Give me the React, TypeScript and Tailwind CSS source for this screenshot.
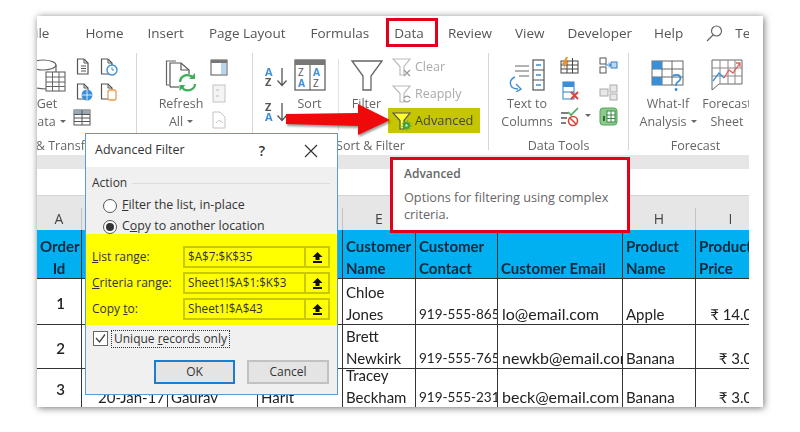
import { ReactNode } from "react"

const rows = [
  { id: "1", b: "", c: "", d: "", name: ["Chloe", "Jones"], phone: "919-555-8654", email: "lo@email.com", product: "Apple", price: "₹ 14.00" },
  { id: "2", b: "", c: "", d: "", name: ["Brett", "Newkirk"], phone: "919-555-7654", email: "newkb@email.com", product: "Banana", price: "₹ 3.00" },
  { id: "3", b: "20-Jan-17", c: "Gaurav", d: "Harit", name: ["Tracey", "Beckham"], phone: "919-555-2314", email: "beck@email.com", product: "Banana", price: "₹ 3.00" },
]

const cols = "grid grid-cols-[45px_86px_90px_85px_73px_82px_125px_73px_70px] w-[729px]"
const cell = "flex flex-col justify-end overflow-hidden whitespace-nowrap border-r border-b border-[#333] pl-[3px] [&>span]:relative [&>span]:top-[1px]"

function Ico({ w, h, children }: { w: number; h: number; children: ReactNode }) {
  return (
    <svg width={w} height={h} viewBox={`0 0 ${w} ${h}`} fill="none" className="shrink-0 block">
      {children}
    </svg>
  )
}

function Funnel({ fill = "none", stroke = "#666" }: { fill?: string; stroke?: string }) {
  return <path d="M1 2H18L12 9.5V18H8V9.5Z" fill={fill} stroke={stroke} strokeWidth="1.2" />
}

function Doc({ children }: { children?: ReactNode }) {
  return (
    <Ico w={18} h={18}>
      <path d="M1.5 1H8L12 5V16H1.5Z" stroke="#555" strokeWidth="1.2" fill="#fff" />
      <path d="M8 1V5H12" stroke="#555" strokeWidth="1" />
      {children}
    </Ico>
  )
}

function SmallTable() {
  return (
    <Ico w={18} h={17}>
      <rect x="1" y="1" width="16" height="15" stroke="#555" fill="#fff" />
      <rect x="1" y="1" width="16" height="4" fill="#9aa6b2" />
      <path d="M1 5.5H17M1 9H17M1 12.500H17M9 1V16" stroke="#555" />
    </Ico>
  )
}

function GetDataIcon() {
  return (
    <Ico w={37} h={33}>
      <ellipse cx="14" cy="6" rx="13" ry="5" stroke="#666" strokeWidth="1.2" />
      <path d="M1 6V25C1 28 8 30 17 30M27 6V13" stroke="#666" strokeWidth="1.2" />
      <rect x="17" y="13" width="19" height="19" fill="#fff" stroke="#555" />
      <path d="M17 18H36M17 23H36M17 27.500H36M23.500 13V32M30 13V32" stroke="#666" />
    </Ico>
  )
}

function RefreshIcon() {
  return (
    <Ico w={32} h={33}>
      <path d="M4 26H1.500V2H11" stroke="#666" strokeWidth="1.2" />
      <path d="M5 28V4H16L24 11V15" stroke="#555" strokeWidth="1.2" />
      <path d="M16 4V11H24" stroke="#555" strokeWidth="1.2" />
      <path d="M5 28H14" stroke="#555" strokeWidth="1.2" />
      <path d="M15 23C15 18 20 14.500 26 17L28 19" stroke="#3fae5b" strokeWidth="2.200" />
      <path d="M30 14V20H24Z" fill="#3fae5b" />
      <path d="M30 25C30 30 24 33 19 30.500L17 28" stroke="#3fae5b" strokeWidth="2.200" />
      <path d="M14.500 32V26H20.500Z" fill="#3fae5b" />
    </Ico>
  )
}

function SortLetters({ top, bottom, topBlue }: { top: string; bottom: string; topBlue: boolean }) {
  return (
    <Ico w={26} h={21}>
      <text x="0" y="10" fontSize="11" fontWeight="700" fontFamily="Open Sans" fill={topBlue ? "#3b8fd6" : "#555"}>{top}</text>
      <text x="0" y="20" fontSize="11" fontWeight="700" fontFamily="Open Sans" fill={topBlue ? "#555" : "#3b8fd6"}>{bottom}</text>
      <path d="M17 2V19M12.500 14.500L17 19.500L21.500 14.500" stroke="#555" strokeWidth="1.300" />
    </Ico>
  )
}

function BigSortIcon() {
  return (
    <Ico w={32} h={32}>
      <rect x="1" y="1" width="30" height="30" stroke="#555" strokeWidth="1.200" fill="#fff" />
      <rect x="1" y="1" width="30" height="5" fill="#777" />
      <path d="M16 6V31" stroke="#555" />
      <text x="4" y="17" fontSize="10" fontFamily="Open Sans" fill="#555">Z</text>
      <text x="4" y="28" fontSize="10" fontFamily="Open Sans" fontWeight="700" fill="#3b8fd6">A</text>
      <text x="19" y="17" fontSize="10" fontFamily="Open Sans" fontWeight="700" fill="#3b8fd6">A</text>
      <text x="19" y="28" fontSize="10" fontFamily="Open Sans" fill="#555">Z</text>
    </Ico>
  )
}

function BigFunnel() {
  return (
    <Ico w={32} h={33}>
      <path d="M1 2H31L20 17V31H12V17Z" stroke="#666" strokeWidth="1.300" />
    </Ico>
  )
}

function ClearIcon() {
  return (
    <Ico w={20} h={20}>
      <Funnel stroke="#bbb" />
      <path d="M12 13L18 19M18 13L12 19" stroke="#999" strokeWidth="1.200" />
    </Ico>
  )
}

function ReapplyIcon() {
  return (
    <Ico w={20} h={20}>
      <Funnel stroke="#bbb" />
      <path d="M12 14C13 11.500 17 11.500 18 14M18 16C17 18.500 13 18.500 12 16" stroke="#999" strokeWidth="1.100" />
    </Ico>
  )
}

function AdvancedIcon() {
  return (
    <Ico w={20} h={20}>
      <Funnel fill="#ffff30" stroke="#555" />
      <circle cx="14.500" cy="14.500" r="3.500" fill="#3da13d" />
      <circle cx="14.500" cy="14.500" r="4.500" stroke="#3da13d" strokeDasharray="1.500 1.500" />
      <circle cx="14.500" cy="14.500" r="1.200" fill="#d8f0c0" />
    </Ico>
  )
}

function TextColumnsIcon() {
  return (
    <Ico w={36} h={33}>
      <path d="M6 7H20M6 12H20M10 17H20" stroke="#666" strokeWidth="1.200" />
      <rect x="24" y="1" width="11" height="30" stroke="#555" strokeWidth="1.200" fill="#fff" />
      <path d="M24 11H35M24 21H35" stroke="#555" />
      <path d="M27 6H32M27 16H32M27 26H32" stroke="#3b8fd6" strokeWidth="1.500" />
      <path d="M6 18C-1 21 0 30 9 30M7 25L12 30L7 33" stroke="#3b8fd6" strokeWidth="1.400" />
    </Ico>
  )
}

function FlashFillIcon() {
  return (
    <Ico w={19} h={17}>
      <rect x="1" y="4" width="17" height="12" stroke="#444" />
      <path d="M1 8H18M1 12H18M7 4V16M12.500 1V16" stroke="#444" />
      <path d="M6 0L2 7H5L3 12L9 5H6L8 0Z" fill="#f0932b" />
    </Ico>
  )
}

function RemoveDupesIcon() {
  return (
    <Ico w={18} h={19}>
      <rect x="1" y="1" width="11" height="17" stroke="#2f7fc7" fill="#fff" />
      <rect x="1" y="1" width="11" height="5" fill="#3b8fd6" />
      <path d="M1 11H12" stroke="#2f7fc7" />
      <path d="M9 11L16 18M16 11L9 18" stroke="#d9453b" strokeWidth="2" />
    </Ico>
  )
}

function ValidationIcon() {
  return (
    <Ico w={20} h={20}>
      <path d="M1 6H8M1 11H7M1 16H6" stroke="#555" strokeWidth="1.300" />
      <path d="M8 5L11 8L18 1" stroke="#4aa85c" strokeWidth="1.600" />
      <circle cx="13" cy="14" r="4.500" stroke="#d9453b" strokeWidth="1.600" />
      <path d="M10 11L16 17" stroke="#d9453b" strokeWidth="1.600" />
    </Ico>
  )
}

function ConsolidateIcon() {
  return (
    <Ico w={19} h={17}>
      <rect x="1" y="1" width="6" height="6" stroke="#555" />
      <rect x="1" y="10" width="6" height="6" stroke="#555" />
      <rect x="12" y="5" width="6" height="6" fill="#bcd8f0" stroke="#2f7fc7" />
      <path d="M6 8H12M9.500 6L12 8L9.500 10" stroke="#2f7fc7" />
    </Ico>
  )
}

function RelationshipsIcon() {
  return (
    <Ico w={19} h={17}>
      <rect x="1" y="5" width="8" height="7" fill="#e8e8e8" stroke="#aaa" />
      <rect x="11" y="1" width="7" height="7" fill="#e8e8e8" stroke="#aaa" />
      <rect x="11" y="10" width="7" height="6" fill="#e8e8e8" stroke="#aaa" />
    </Ico>
  )
}

function DataModelIcon() {
  return (
    <Ico w={19} h={19}>
      <rect x="1" y="1" width="17" height="17" rx="3" fill="#8fc98a" stroke="#4aa85c" />
      <rect x="8" y="4" width="8" height="11" fill="#fff" stroke="#3a8a46" />
      <path d="M8 8H16M8 11.500H16M12 4V15" stroke="#3a8a46" />
      <path d="M5 9V14" stroke="#2f6a38" strokeWidth="2" />
    </Ico>
  )
}

function WhatIfIcon() {
  return (
    <Ico w={34} h={34}>
      <rect x="1" y="1" width="31" height="24" stroke="#666" fill="#fff" />
      <path d="M1 9H32M1 17H32M11 1V25M21 1V25" stroke="#666" />
      <rect x="1" y="1" width="10" height="8" fill="#3b8fd6" />
      <rect x="1" y="17" width="10" height="8" fill="#3b8fd6" />
      <text x="21" y="31" fontSize="23" fontFamily="Open Sans" fill="#3b8fd6">?</text>
    </Ico>
  )
}

function ForecastIcon() {
  return (
    <Ico w={32} h={32}>
      <path d="M1 1H31V25H8L1 31Z" stroke="#666" fill="#fff" />
      <path d="M1 9H31M1 17H31M9 1V25M17 1V25M24 1V25" stroke="#888" />
      <path d="M2 22L8 14L13 19" stroke="#3b8fd6" strokeWidth="1.300" />
      <path d="M13 19L18 11L22 14L29 4M25 4H29V8" stroke="#e0605a" strokeWidth="1.300" />
    </Ico>
  )
}

function UpArrow() {
  return (
    <svg width="11" height="11" viewBox="0 0 11 11" className="block">
      <path d="M5.500 0L10.500 5H7.500V8H3.500V5H0.500Z" fill="#111" />
      <rect x="1" y="9" width="9" height="2" fill="#111" />
    </svg>
  )
}

function Divider() {
  return <div className="w-px h-[97px] mt-[6px] bg-[#d6d6d6] shrink-0" />
}

function BigLabel({ lines }: { lines: string[] }) {
  return (
    <div className="mt-[4px] flex flex-col items-center whitespace-nowrap leading-[18px]">
      {lines.map((l) => (
        <span key={l}>{l}</span>
      ))}
    </div>
  )
}

function Caret() {
  return <span className="inline-block ml-[4px] mb-[2px] align-middle border-x-[3px] border-t-[3px] border-x-transparent border-t-[#666]" />
}

function GroupLabel({ children }: { children: ReactNode }) {
  return <div className="h-[18px] leading-[18px] text-center whitespace-nowrap">{children}</div>
}

function Ribbon() {
  return (
    <div className="flex h-[108px] text-[12.5px] text-[#666] shrink-0">
      {/* Get & Transform */}
      <div className="w-[99px] shrink-0 flex flex-col">
        <div className="h-[93px] pt-[12px] flex">
          <div className="-ml-[10px] w-[40px] shrink-0 flex flex-col items-center">
            <div className="h-[33px] -mb-[1px]"><GetDataIcon /></div>
            <div className="mt-[4px] flex flex-col items-center whitespace-nowrap leading-[18px]">
              <span>Get</span>
              <span>Data<Caret /></span>
            </div>
          </div>
          <div className="ml-[9px] flex flex-col -mt-[1px]">
            <div className="flex gap-[6px] h-[25px]">
              <Doc><path d="M5 8H10M5 10.500H10M5 13H10" stroke="#555" /></Doc>
              <Doc><circle cx="12" cy="12" r="5" fill="#fff" stroke="#3b8fd6" strokeWidth="1.400" /><path d="M12 9.500V12H14" stroke="#3b8fd6" /></Doc>
            </div>
            <div className="flex gap-[6px] h-[26px]">
              <Doc><circle cx="11" cy="12" r="5.500" fill="#3b8fd6" /><path d="M5.500 12H16.500M11 6.500V17.500" stroke="#fff" strokeWidth="0.800" /></Doc>
              <Doc><rect x="8" y="7" width="8" height="10" rx="2" fill="#fff" stroke="#f09a4a" strokeWidth="1.300" /></Doc>
            </div>
            <div className="-ml-[3px]"><SmallTable /></div>
          </div>
        </div>
        <div className="-ml-[25px]"><GroupLabel>Get &amp; Transform Data</GroupLabel></div>
      </div>
      <Divider />

      {/* Queries */}
      <div className="w-[115px] shrink-0 h-[93px] pt-[12px] flex">
        <div className="ml-[19px] w-[50px] flex flex-col items-center">
          <div className="h-[32px] overflow-visible"><RefreshIcon /></div>
          <BigLabel lines={["Refresh"]} />
          <span className="leading-[18px]">All<Caret /></span>
        </div>
        <div className="ml-[4px] flex flex-col gap-[8px]">
          <Ico w={18} h={17}>
            <rect x="1" y="1" width="16" height="15" stroke="#555" fill="#fff" />
            <rect x="1" y="1" width="16" height="3" fill="#777" />
            <rect x="11" y="4" width="5" height="11" fill="#b9d4ee" />
          </Ico>
          <Ico w={18} h={19}>
            <rect x="3" y="1" width="12" height="17" stroke="#c4c4c4" fill="#f4f4f4" />
            <path d="M6 6H9M6 12H9" stroke="#bbb" />
          </Ico>
          <Ico w={18} h={18}>
            <path d="M3 1H10L15 6V17H3Z" stroke="#c4c4c4" />
            <path d="M6 12C8 9 11 9 13 12" stroke="#bbb" />
          </Ico>
        </div>
      </div>
      <Divider />

      {/* Sort & Filter */}
      <div className="w-[235px] shrink-0 flex flex-col">
        <div className="h-[93px] pt-[12px] flex">
          <div className="ml-[12px] w-[26px] mt-[7px] flex flex-col gap-[14px]">
            <SortLetters top="A" bottom="Z" topBlue />
            <SortLetters top="Z" bottom="A" topBlue={false} />
          </div>
          <div className="w-[37px] flex flex-col items-center">
            <BigSortIcon />
            <BigLabel lines={["Sort"]} />
          </div>
          <div className="ml-[10px] w-px h-[72px] bg-[#e2e2e2]" />
          <div className="ml-[6px] w-[43px] flex flex-col items-center">
            <BigFunnel />
            <div className="-mt-[1px]"><BigLabel lines={["Filter"]} /></div>
          </div>
          <div className="-mt-[5px] flex flex-col w-[92px]">
            <div className="h-[26px] flex items-center gap-[3px] pl-[4px] text-[#aaa]"><ClearIcon />Clear</div>
            <div className="h-[28px] flex items-center gap-[3px] pl-[4px] text-[#aaa]"><ReapplyIcon />Reapply</div>
            <div className="h-[25px] flex items-center gap-[3px] pl-[4px] bg-[#c6c600] text-[#444] text-[12.8px]"><AdvancedIcon />Advanced</div>
          </div>
        </div>
        <GroupLabel>Sort &amp; Filter</GroupLabel>
      </div>
      <Divider />

      {/* Data Tools */}
      <div className="w-[139px] shrink-0 flex flex-col">
        <div className="h-[93px] pt-[12px] flex">
          <div className="ml-[8px] w-[60px] flex flex-col items-center">
            <TextColumnsIcon />
            <div className="-mt-[1px]"><BigLabel lines={["Text to", "Columns"]} /></div>
          </div>
          <div className="ml-[3px] w-[39px] -mt-[2px] flex flex-col">
            <div className="h-[24px]"><FlashFillIcon /></div>
            <div className="h-[26px] pl-[2px]"><RemoveDupesIcon /></div>
            <div className="flex items-start">
              <ValidationIcon />
              <span className="ml-[5px] mt-[7px] border-x-[3px] border-t-[3px] border-x-transparent border-t-[#666]" />
            </div>
          </div>
          <div className="-mt-[2px] flex flex-col">
            <div className="h-[27px]"><ConsolidateIcon /></div>
            <div className="h-[23px]"><RelationshipsIcon /></div>
            <DataModelIcon />
          </div>
        </div>
        <GroupLabel>Data Tools</GroupLabel>
      </div>
      <Divider />

      {/* Forecast */}
      <div className="w-[133px] shrink-0 flex flex-col">
        <div className="h-[93px] pt-[12px] flex">
          <div className="ml-[9px] w-[60px] flex flex-col items-center">
            <div className="h-[32px] mt-[1px] -mb-[1px]"><WhatIfIcon /></div>
            <div className="flex flex-col items-center mt-[4px] whitespace-nowrap leading-[18px]">
              <span>What-If</span>
              <span>Analysis<Caret /></span>
            </div>
          </div>
          <div className="w-[58px] flex flex-col items-center">
            <ForecastIcon />
            <BigLabel lines={["Forecast", "Sheet"]} />
          </div>
        </div>
        <GroupLabel>Forecast</GroupLabel>
      </div>
    </div>
  )
}

function Sheet() {
  return (
    <div className="font-['Lato','Noto_Sans',sans-serif] text-[15px] leading-[22px] text-[#222]">
      <div className="bg-[#e6e6e6] h-[34px]">
        <div className={`${cols} h-full text-[14px] text-[#444] font-['Open_Sans',sans-serif]`}>
          {["A", "", "", "", "E", "", "", "H", "I"].map((letter, i) => (
            <div key={i} className="mt-[12px] border-r border-[#c4c4c4] text-center">{letter}</div>
          ))}
        </div>
      </div>
      <div className={`${cols} grid-rows-[49px_46px_44px_39px]`}>
        <div className={`${cell} bg-[#00b0f0] font-bold text-center pr-[3px] text-[#12293c]`}>
          <span>Order</span>
          <span>Id</span>
        </div>
        <div className={`${cell} bg-[#00b0f0]`} />
        <div className={`${cell} bg-[#00b0f0]`} />
        <div className={`${cell} bg-[#00b0f0]`} />
        {[["Customer", "Name"], ["Customer", "Contact"], ["Customer Email"], ["Product", "Name"], ["Product", "Price"]].map((h) => (
          <div key={h.join(" ")} className={`${cell} bg-[#00b0f0] font-bold text-[#12293c]`}>
            {h.map((t) => (
              <span key={t}>{t}</span>
            ))}
          </div>
        ))}
        {rows.map((r) => (
          <div key={r.id} className="contents">
            <div className={`${cell} justify-center! items-center pl-0 font-semibold`}><span>{r.id}</span></div>
            <div className={`${cell} items-end pr-[2px]`}><span>{r.b}</span></div>
            <div className={cell}><span>{r.c}</span></div>
            <div className={cell}><span>{r.d}</span></div>
            <div className={cell}>
              {r.name.map((n) => (
                <span key={n}>{n}</span>
              ))}
            </div>
            <div className={`${cell} text-[13.5px]`}><span>{r.phone}</span></div>
            <div className={`${cell} pl-[4px] text-[16px]`}><span>{r.email}</span></div>
            <div className={cell}><span>{r.product}</span></div>
            <div className={`${cell} items-end pr-[4px]`}><span>{r.price}</span></div>
          </div>
        ))}
      </div>
    </div>
  )
}

function RangeRow({ label, value }: { label: ReactNode; value: string }) {
  return (
    <div className="flex items-center h-[26px]">
      <div className="w-[97px] pl-[6px] shrink-0 whitespace-nowrap">{label}</div>
      <div className="w-[147px] h-[22px] border-2 border-[#c9c900] flex items-center">
        <span className="flex-1 pl-[3px] whitespace-nowrap overflow-hidden text-[11.7px]">{value}</span>
        <span className="w-[24px] h-full border-l-2 border-[#c9c900] flex items-center justify-center"><UpArrow /></span>
      </div>
    </div>
  )
}

function AdvancedFilterDialog() {
  return (
    <div className="absolute left-[48px] top-[117px] w-[253px] h-[262px] border border-[#5a9bd5] bg-[#f0f0f0] flex flex-col font-['Open_Sans',sans-serif] text-[12px] text-[#333]">
      <div className="h-[33px] bg-white flex items-center pl-[9px] text-[12.5px] text-[#333] shrink-0">
        <span className="flex-1">Advanced Filter</span>
        <span className="mr-[39px] text-[14px] font-semibold">?</span>
        <svg width="14" height="14" viewBox="0 0 14 14" className="mr-[19px]">
          <path d="M1 1L13 13M13 1L1 13" stroke="#333" strokeWidth="1.200" />
        </svg>
      </div>
      <div className="flex items-center mt-[7px] pl-[6px] pr-[7px] h-[18px] gap-[5px]">
        <span>Action</span>
        <span className="flex-1 h-px bg-[#dcdcdc]" />
      </div>
      <div className="flex items-center h-[21px] mt-[3px] pl-[17px] gap-[5px] text-[12.4px]">
        <span className="w-[14px] h-[14px] rounded-full border border-[#555] bg-white" />
        <span><u>F</u>ilter the list, in-place</span>
      </div>
      <div className="flex items-center h-[21px] pl-[17px] gap-[5px] text-[12.4px]">
        <span className="w-[14px] h-[14px] rounded-full border border-[#555] bg-white flex items-center justify-center">
          <span className="w-[8px] h-[8px] rounded-full bg-[#333]" />
        </span>
        <span>C<u>o</u>py to another location</span>
      </div>
      <div className="relative -mt-[3px] h-[91px] bg-[#ffff00] pt-[10px] text-[#333]">
        <RangeRow label={<><u>L</u>ist range:</>} value="$A$7:$K$35" />
        <RangeRow label={<><u>C</u>riteria range:</>} value="Sheet1!$A$1:$K$3" />
        <RangeRow label={<>Copy <u>t</u>o:</>} value="Sheet1!$A$43" />
      </div>
      <div className="flex items-center mt-[4px] pl-[7px] gap-[2px] h-[19px]">
        <svg width="15" height="15" viewBox="0 0 15 15" className="shrink-0">
          <rect x="0.500" y="0.500" width="14" height="14" fill="#fff" stroke="#666" />
          <path d="M3 7L6.500 11L12 3.500" stroke="#444" strokeWidth="1.300" fill="none" />
        </svg>
        <span className="border border-dotted border-[#333] px-[2px] leading-[16px] ml-[1px]">Unique <u>r</u>ecords only</span>
      </div>
      <div className="flex mt-[12px] ml-[68px] gap-[12px]">
        <div className="w-[81px] h-[24px] border-2 border-[#1a7fd0] bg-[#e4e4e4] flex items-center justify-center">OK</div>
        <div className="w-[82px] h-[24px] border-2 border-[#c2c2c2] bg-[#e4e4e4] flex items-center justify-center">Cancel</div>
      </div>
    </div>
  )
}

export default function App() {
  return (
    <div className="w-[800px] h-[432px] bg-white pt-[16px] pl-[37px] overflow-hidden">
      <div className="relative w-[726px] h-[391px] bg-white shadow-[1px_1px_7px_rgba(0,0,0,0.55)] blur-[0.35px]">
        <div className="w-[712px] h-full overflow-hidden flex flex-col font-['Open_Sans',sans-serif]">
          <div className="h-[31px] flex items-center text-[13.5px] text-[#555] whitespace-nowrap shrink-0 pt-[3px]">
            <span className="-ml-[9px] mr-[36px]">File</span>
            <span className="mr-[24px]">Home</span>
            <span className="mr-[25px]">Insert</span>
            <span className="mr-[25px]">Page Layout</span>
            <span className="mr-[25px]">Formulas</span>
            <span className="mr-[24px]">Data</span>
            <span className="mr-[23px]">Review</span>
            <span className="mr-[23px]">View</span>
            <span className="mr-[22px]">Developer</span>
            <span className="mr-[23px]">Help</span>
            <span className="flex items-center gap-[12px]">
              <svg width="17" height="17" viewBox="0 0 17 17" fill="none">
                <circle cx="10.500" cy="6" r="5" stroke="#666" strokeWidth="1.200" />
                <path d="M7 10L1 16" stroke="#666" strokeWidth="1.300" />
              </svg>
              Tell me
            </span>
          </div>
          <Ribbon />
          <div className="h-[14px] bg-[#e6e6e6] shrink-0" />
          <div className="h-[27px] bg-white border-b border-[#d4d4d4] shrink-0" />
          <Sheet />
        </div>

        {/* red marker round the Data tab */}
        <div className="absolute left-[349px] top-[2px] w-[52px] h-[29px] border-[3px] border-[#e3001b]" />

        {/* arrow pointing at Advanced */}
        <svg width="110" height="36" viewBox="0 0 110 36" className="absolute left-[248px] top-[87px] drop-shadow-[1px_2px_1px_rgba(0,0,0,0.4)]">
          <path d="M1 11L73 10V1L105 17L73 32V23L1 21Z" fill="#ee0a0a" />
        </svg>

        <AdvancedFilterDialog />

        {/* tooltip */}
        <div className="absolute left-[353px] top-[141px] w-[240px] h-[76px] bg-white border-[3px] border-[#e3001b] pl-[11px] pt-[5px] font-['Open_Sans',sans-serif] text-[12.7px] leading-[17px] text-[#666]">
          <div className="font-semibold mb-[7px] text-[12px]">Advanced</div>
          <div className="w-[215px]">Options for filtering using complex criteria.</div>
        </div>
      </div>
    </div>
  )
}
